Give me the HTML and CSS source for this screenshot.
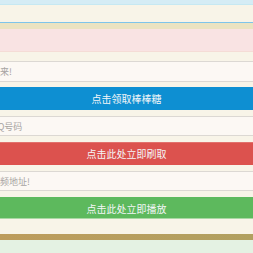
FILE: index.html
```html
<!DOCTYPE html>
<html>
  <head>
    <meta charset="utf-8">
    <meta name="viewport" content="width=device-width, initial-scale=1">
    <title>棒棒糖</title>
    <link rel="stylesheet" href="styles.css">
  </head>
  <body>
    <div id="page">
      <div class="bar_info"></div>
      <div class="panel_body"></div>
      <div class="bar_warning"></div>
      <div class="bar_danger"></div>
      <form id="main" onsubmit="return false">
        <input class="field" type="text" placeholder="棒棒糖快来!">
        <button class="btn btn_primary" type="button">点击领取棒棒糖</button>
        <input class="field" type="text" placeholder="请输入QQ号码">
        <button class="btn btn_danger" type="button">点击此处立即刷取</button>
        <input class="field" type="text" placeholder="请输入视频地址!">
        <button class="btn btn_success" type="button">点击此处立即播放</button>
      </form>
      <div class="bar_footer"></div>
      <div class="bar_bottom"></div>
    </div>
  </body>
</html>
```

FILE: styles.css
```css
body {
  margin: 0;
  background: #f8f4e8;
  font-family: "Noto Sans CJK SC", "Noto Sans", sans-serif;
}

#page {
  display: flex;
  flex-direction: column;
}

.bar_info {
  height: 4px;
  background: #d5ecf5;
  border-bottom: 1px solid #c6e8f2;
}

.panel_body {
  height: 17px;
  background: #f8f4e8;
  border-bottom: 1px solid #7ec4ea;
}

.bar_warning {
  height: 6px;
  background: #ebe3c1;
}

.bar_danger {
  height: 22px;
  background: #f9e3e3;
  border-bottom: 1px solid #f5dcd6;
}

#main {
  display: flex;
  flex-direction: column;
  gap: 6px;
  padding: 9px 0 15px;
}

.field {
  height: 20px;
  box-sizing: border-box;
  margin: 0;
  padding: 0;
  border: 1px solid #dcd8d3;
  border-left: 0;
  border-right: 0;
  background: #fcf8f4;
  font-family: inherit;
  font-size: 9px;
  text-indent: -36px;
  outline: none;
}

.field:first-child {
  height: 21px;
  margin-bottom: -1px;
}

.field::placeholder {
  color: #a7a4a2;
}

.btn {
  height: 23px;
  margin: 0;
  padding: 0;
  border: 1px solid;
  border-left: 0;
  border-right: 0;
  color: #f4f6f8;
  font-family: inherit;
  font-size: 10px;
  cursor: pointer;
}

.btn_primary {
  background: #0e8fd2;
  border-color: #0e8fd2;
}

.btn_danger {
  background: #dc524e;
  border-color: #e2716d #dc524e #dc524e;
}

.btn_success {
  height: 22px;
  background: #5db95d;
  border-color: #5db95d #5db95d #a9d9a4;
}

.bar_footer {
  height: 6px;
  background: linear-gradient(to right, #bd9c5c, #b1a060);
}

.bar_bottom {
  height: 20px;
  background: #e4f2e3;
}
```
